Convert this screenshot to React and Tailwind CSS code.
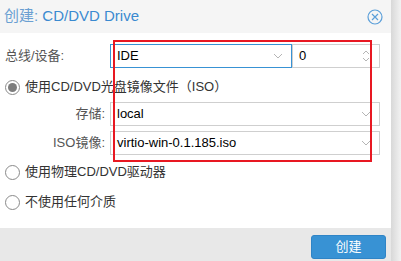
import React from 'react';

const Chevron = () => (
  <svg width="10" height="6" viewBox="0 0 10 6" className="shrink-0">
    <path d="M1 1 L5 5 L9 1" fill="none" stroke="#b5b5b5" strokeWidth="1" />
  </svg>
);

const Spinner = () => (
  <svg width="10" height="14" viewBox="0 0 10 14" className="shrink-0">
    <path d="M2 5 L5 2 L8 5" fill="none" stroke="#b5b5b5" strokeWidth="1" />
    <path d="M2 9 L5 12 L8 9" fill="none" stroke="#b5b5b5" strokeWidth="1" />
  </svg>
);

const Radio = ({ checked }) => (
  <span className="w-[15px] h-[15px] rounded-full border border-[#8a8a8a] bg-white flex items-center justify-center shrink-0">
    {checked && <span className="w-[9px] h-[9px] rounded-full bg-[#7d7d7d]" />}
  </span>
);

const Field = ({ value, focused, width, icon }) => (
  <div
    className={`h-[24px] ${width} flex items-center justify-between pl-[6px] pr-[8px] bg-white border ${
      focused ? 'border-[#3892d4]' : 'border-[#cfcfcf]'
    }`}
  >
    <span className="text-[13px] text-black">{value}</span>
    {icon}
  </div>
);

export default function App() {
  return (
    <div
      className="w-[401px] h-[261px] flex overflow-hidden relative"
      style={{ fontFamily: '"Liberation Sans", "Noto Sans CJK SC", sans-serif' }}
    >
      <div className="w-[391px] h-full flex flex-col bg-white">
        <div className="h-[33px] bg-[#f5f5f5] flex items-center justify-between pl-[4px] pr-[8px]">
          <span className="text-[15px] text-[#3a8ad0]">
            <span className="text-[#6a9fd2]">创建:</span> CD/DVD Drive
          </span>
          <svg width="16" height="16" viewBox="0 0 16 16">
            <circle cx="8" cy="8" r="7" fill="none" stroke="#5b9fd9" strokeWidth="1.2" />
            <path d="M5 5 L11 11 M11 5 L5 11" stroke="#5b9fd9" strokeWidth="1.2" />
          </svg>
        </div>

        <div className="flex-1 flex flex-col pl-[5px] pt-[11px] text-[13px]">
          <div className="flex items-center">
            <span className="w-[105px] text-[#555]">总线/设备:</span>
            <Field value="IDE" focused width="w-[182px]" icon={<Chevron />} />
            <Field value="0" width="w-[88px]" icon={<Spinner />} />
          </div>

          <div className="flex items-center gap-[5px] mt-[11px] h-[16px]">
            <Radio checked />
            <span className="text-[#333]">使用CD/DVD光盘镜像文件（ISO）</span>
          </div>

          <div className="flex items-center mt-[7px]">
            <span className="w-[105px] pr-[5px] text-right text-[#555]">存储:</span>
            <Field value="local" width="w-[270px]" icon={<Chevron />} />
          </div>

          <div className="flex items-center mt-[5px]">
            <span className="w-[105px] pr-[5px] text-right text-[#555]">ISO镜像:</span>
            <Field value="virtio-win-0.1.185.iso" width="w-[270px]" icon={<Chevron />} />
          </div>

          <div className="flex items-center gap-[5px] mt-[9px] h-[16px]">
            <Radio />
            <span className="text-[#333]">使用物理CD/DVD驱动器</span>
          </div>

          <div className="flex items-center gap-[5px] mt-[14px] h-[16px]">
            <Radio />
            <span className="text-[#333]">不使用任何介质</span>
          </div>
        </div>

        <div className="h-[33px] bg-[#e8e8e8] flex items-start justify-end pt-[7px] pr-[5px]">
          <button className="w-[75px] h-[24px] rounded-[3px] bg-[#3892d4] border border-[#2f84c6] text-white text-[13px]">
            创建
          </button>
        </div>
      </div>
      <div className="w-[10px] h-full bg-gradient-to-r from-[#d8d8d8] to-[#f2f2f2]" />

      <div className="absolute left-[113px] top-[40px] w-[259px] h-[122px] border-2 border-[#e81822] pointer-events-none" />
    </div>
  );
}
